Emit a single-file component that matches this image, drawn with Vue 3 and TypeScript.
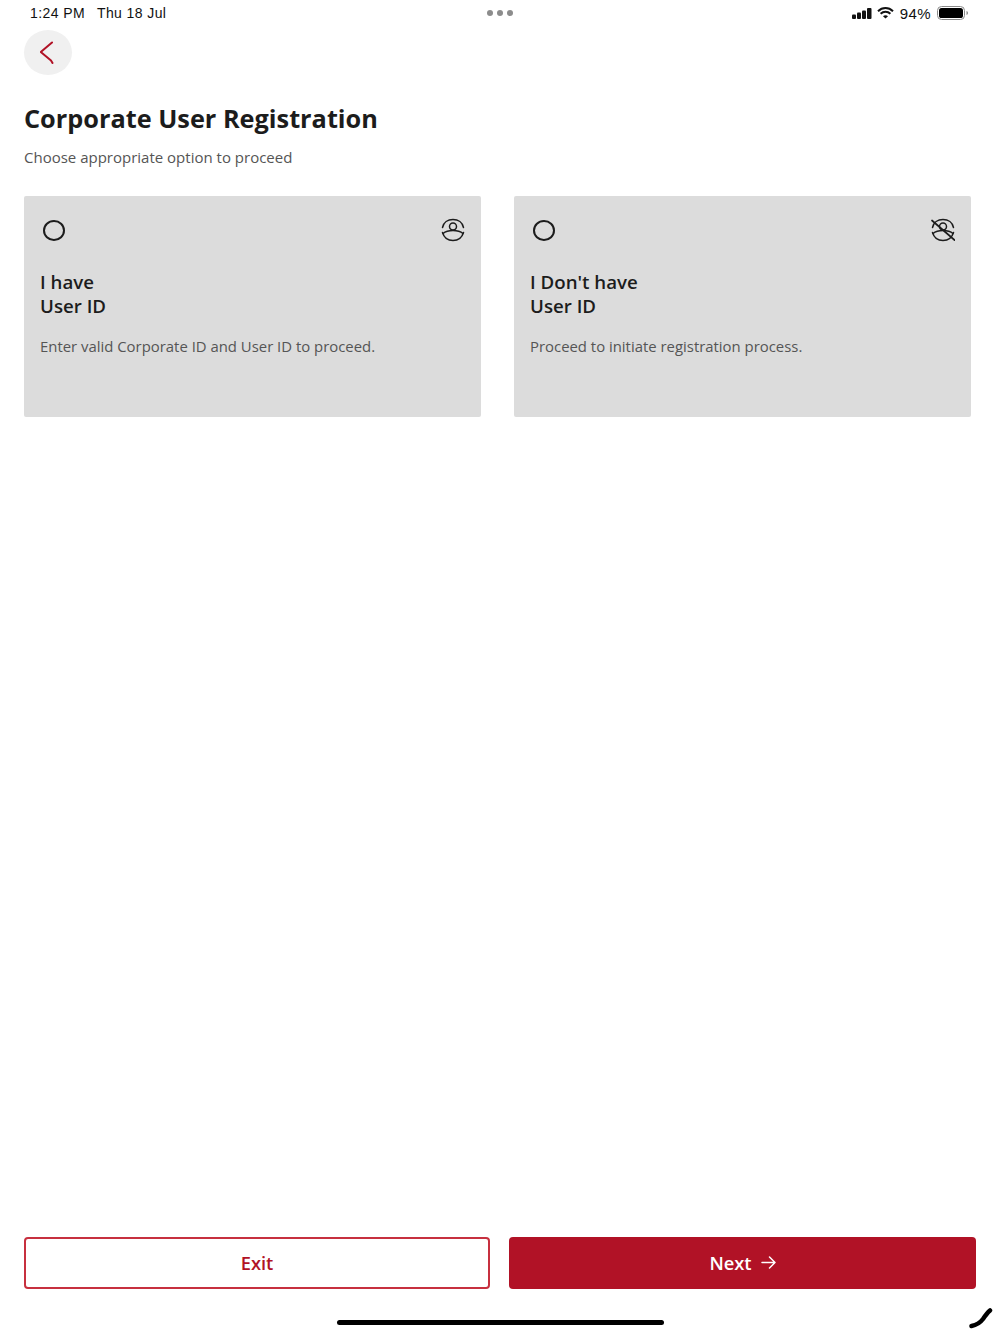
<script setup lang="ts">
import { ref } from 'vue';

type Option = { id: string; title: string[]; text: string; noUser: boolean };

const options: Option[] = [
  { id: 'has-id', title: ['I have', 'User ID'], text: 'Enter valid Corporate ID and User ID to proceed.', noUser: false },
  { id: 'no-id', title: ["I Don't have", 'User ID'], text: 'Proceed to initiate registration process.', noUser: true },
];

const selected = ref<string | null>(null);
</script>

<template>
  <div class="page">
    <header class="status-bar">
      <div class="status-left">
        <span>1:24 PM</span>
        <span>Thu 18 Jul</span>
      </div>
      <div class="dots"><i></i><i></i><i></i></div>
      <div class="status-right">
        <svg width="20" height="11" viewBox="0 0 20 11">
          <rect x="0" y="6.500" width="4" height="4.500" rx="1" />
          <rect x="5" y="4.500" width="4" height="6.500" rx="1" />
          <rect x="10" y="2.500" width="4" height="8.500" rx="1" />
          <rect x="15" y="0" width="4.500" height="11" rx="1" />
        </svg>
        <svg class="wifi" width="17" height="12" viewBox="0 0 17 12" fill="none" stroke="#111" stroke-width="2">
          <path d="M1 4.200C5.400 0 11.600 0 16 4.200" />
          <path d="M3.600 6.800C6.400 4.200 10.600 4.200 13.400 6.800" />
          <path d="M8.500 11.600L6 9.200C7.400 8 9.600 8 11 9.200Z" fill="#111" stroke="none" />
        </svg>
        <span>94%</span>
        <svg width="32" height="14" viewBox="0 0 32 14">
          <rect x="0.500" y="0.500" width="27" height="13" rx="4" fill="none" stroke="#8a8a8a" />
          <rect x="2" y="2" width="24" height="10" rx="2.600" fill="#000" />
          <path d="M29.500 5v4c.9-.3 1.500-1.100 1.500-2s-.6-1.700-1.500-2z" fill="#8a8a8a" />
        </svg>
      </div>
    </header>

    <button class="back" type="button" aria-label="Back">
      <svg width="16" height="24" viewBox="0 0 16 24" fill="none" stroke="#b11226" stroke-width="2" stroke-linecap="round" stroke-linejoin="round">
        <path d="M12 1.500L0.800 11L11 19.500L12.500 22" />
      </svg>
    </button>

    <h1 class="title">Corporate User Registration</h1>
    <p class="subtitle">Choose appropriate option to proceed</p>

    <section class="options">
      <article v-for="opt in options" :key="opt.id" class="card" @click="selected = opt.id">
        <div class="card-top">
          <span class="radio" :class="{ on: selected === opt.id }"></span>
          <svg width="24" height="24" viewBox="0 0 24 24" fill="none" stroke="#1c1c1c" stroke-width="1.500" stroke-linecap="round">
            <path d="M1.500 9.500C2.500 4.500 6.800 1.500 12 1.500s9.500 3 10.500 8" />
            <circle cx="12" cy="8.500" r="3.500" />
            <path d="M1.500 14.500c1.500 5 5.500 8 10.500 8s9-3 10.500-8" />
            <path d="M2 15.500c3-2.500 6-3 10-3s7 .5 10 3" />
            <path v-if="opt.noUser" d="M1 2.500L23.500 22" stroke-width="1.700" />
          </svg>
        </div>
        <h2 class="card-title">
          <span v-for="line in opt.title" :key="line">{{ line }}</span>
        </h2>
        <p class="card-text">{{ opt.text }}</p>
      </article>
    </section>

    <footer class="actions">
      <button class="btn exit" type="button">Exit</button>
      <button class="btn next" type="button">
        Next
        <svg width="15" height="13" viewBox="0 0 15 13" fill="none" stroke="#fff" stroke-width="1.500" stroke-linecap="round" stroke-linejoin="round">
          <path d="M1 6.500H14M8.500 1L14 6.500L8.500 12" />
        </svg>
      </button>
    </footer>

    <div class="home-bar"></div>
    <svg class="corner" width="24" height="22" viewBox="0 0 24 22" fill="none" stroke="#000" stroke-width="4.500" stroke-linecap="round">
      <path d="M2.500 19C8 18 11 16 14 12C16 9 18 6 21 3.500" />
    </svg>
  </div>
</template>

<style scoped>
.page {
  position: relative;
  width: 1000px;
  height: 1334px;
  display: flex;
  flex-direction: column;
  box-sizing: border-box;
  background: #fff;
  color: #1c1c1c;
  font-family: "Open Sans", "Noto Sans", sans-serif;
  overflow: hidden;
}

.status-bar {
  height: 26px;
  padding: 0 31px 0 30px;
  display: grid;
  grid-template-columns: 1fr auto 1fr;
  align-items: center;
  font-family: "Liberation Sans", Arial, sans-serif;
  font-size: 14px;
  letter-spacing: 0.4px;
  color: #111;
}

.status-left {
  display: flex;
  gap: 12px;
}

.dots {
  display: flex;
  gap: 4px;
}

.dots i {
  width: 6px;
  height: 6px;
  border-radius: 50%;
  background: #8c8c8c;
}

.status-right {
  display: flex;
  justify-content: flex-end;
  align-items: center;
  gap: 5px;
  font-size: 15px;
}

.status-right span {
  margin: 0 1px;
}

.status-right svg {
  fill: #111;
}

.status-right .wifi {
  fill: none;
}

.back {
  width: 48px;
  height: 45px;
  margin: 4px 0 0 24px;
  padding: 0;
  border: 0;
  border-radius: 50%;
  background: #f0f0f0;
  display: flex;
  align-items: center;
  justify-content: center;
}

.title {
  margin: 25px 0 0 24px;
  font-size: 25.300px;
  line-height: 36px;
  font-weight: 700;
}

.subtitle {
  margin: 9px 0 0 24px;
  font-size: 15px;
  line-height: 24px;
  color: #555;
}

.options {
  display: grid;
  grid-template-columns: 457px 457px;
  column-gap: 33px;
  margin: 27px 0 0 24px;
}

.card {
  height: 221px;
  box-sizing: border-box;
  padding: 22px 16px 0;
  background: #dcdcdc;
  border-radius: 2px;
}

.card-top {
  display: flex;
  justify-content: space-between;
  align-items: center;
  height: 24px;
  padding-left: 3px;
}

.radio {
  width: 18px;
  height: 17px;
  border: 2px solid #1c1c1c;
  border-radius: 50%;
}

.radio.on {
  background: #b11226;
}

.card-title {
  margin: 28px 0 0;
  font-size: 18.700px;
  line-height: 24px;
  font-weight: 600;
}

.card-title span {
  display: block;
}

.card-text {
  margin: 17px 0 0;
  font-size: 14.900px;
  line-height: 22px;
  color: #555;
}

.actions {
  margin-top: auto;
  display: grid;
  grid-template-columns: 466px 467px;
  column-gap: 19px;
  padding-left: 24px;
}

.btn {
  height: 52.500px;
  box-sizing: border-box;
  border-radius: 4px;
  font-family: inherit;
  font-size: 18.300px;
  font-weight: 600;
  display: flex;
  align-items: center;
  justify-content: center;
  gap: 9px;
}

.exit {
  background: #fff;
  border: 2px solid #c7303f;
  color: #b11226;
}

.next {
  background: #b11226;
  border: 0;
  color: #fff;
}

.home-bar {
  width: 327px;
  height: 5px;
  margin: 31px auto 9px;
  background: #000;
  border-radius: 3px;
}

.corner {
  position: absolute;
  right: 7px;
  bottom: 5px;
}
</style>
